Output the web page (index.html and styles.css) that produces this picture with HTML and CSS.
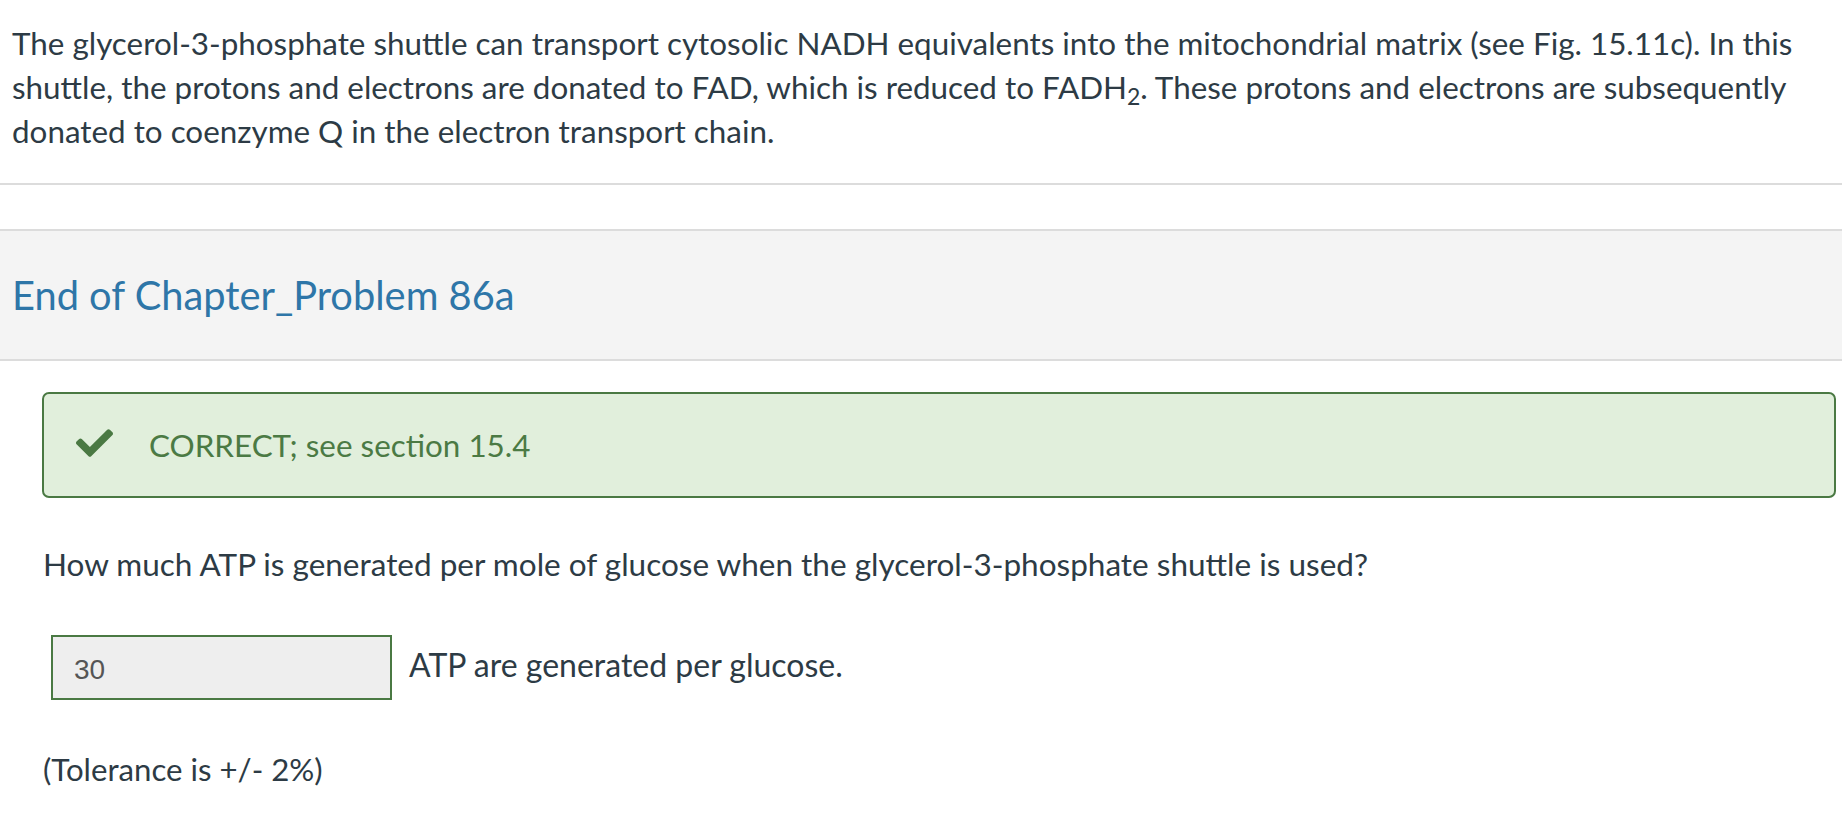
FILE: index.html
```html
<!DOCTYPE html>
<html lang="en">
<head>
<meta charset="utf-8">
<title>End of Chapter_Problem 86a</title>
<link rel="stylesheet" href="styles.css">
</head>
<body>
<div class="page">
  <section class="intro">
    <p class="intro-text">The glycerol-3-phosphate shuttle can transport cytosolic NADH equivalents into the mitochondrial matrix (see Fig. 15.11c). In this shuttle, the protons and electrons are donated to FAD, which is reduced to FADH<sub>2</sub>. These protons and electrons are subsequently donated to coenzyme Q in the electron transport chain.</p>
  </section>
  <hr class="divider">
  <div class="spacer"></div>
  <header class="question-header">
    <h2 class="question-title">End of Chapter_Problem 86a</h2>
  </header>
  <section class="question-body">
    <div class="alert-correct">
      <svg class="check-icon" viewBox="0 69 512 374" width="37" height="28" aria-hidden="true">
        <path fill="currentColor" d="M173.898 439.404l-166.4-166.4c-9.997-9.997-9.997-26.206 0-36.204l36.203-36.204c9.997-9.998 26.207-9.998 36.204 0L192 312.690 432.095 72.596c9.997-9.997 26.207-9.997 36.204 0l36.203 36.204c9.997 9.997 9.997 26.206 0 36.204l-294.400 294.401c-9.998 9.997-26.207 9.997-36.204-.001z"/>
      </svg>
      <span class="alert-text">CORRECT; see section 15.4</span>
    </div>
    <p class="question-text">How much ATP is generated per mole of glucose when the glycerol-3-phosphate shuttle is used?</p>
    <div class="answer-row">
      <input class="answer-input" type="text" value="30" readonly>
      <span class="answer-label">ATP are generated per glucose.</span>
    </div>
    <p class="tolerance">(Tolerance is +/- 2%)</p>
  </section>
</div>
</body>
</html>
```

FILE: styles.css
```css
html, body {
  margin: 0;
  padding: 0;
  background: #ffffff;
}

body {
  font-family: Lato, "Open Sans", "Liberation Sans", sans-serif;
  color: #2d3b45;
  font-size: 32px;
  line-height: 44px;
}

.page {
  display: flex;
  flex-direction: column;
}

.intro {
  padding: 21px 12px 30px 12px;
}

.intro-text {
  margin: 0;
  font-size: 31.4px;
}

.intro-text sub {
  font-size: 23px;
  line-height: 0;
  vertical-align: -6px;
}

.divider {
  margin: 0;
  border: 0;
  height: 2px;
  background: #dcdcdc;
}

.spacer {
  height: 44px;
}

.question-header {
  display: flex;
  align-items: center;
  height: 128px;
  padding: 0 12px;
  background: #f4f4f4;
  border-top: 2px solid #dcdcdc;
  border-bottom: 2px solid #dcdcdc;
}

.question-title {
  margin: 0;
  font-size: 39.8px;
  font-weight: 400;
  line-height: 48px;
  color: #2e76a8;
}

.question-body {
  display: flex;
  flex-direction: column;
  align-items: flex-start;
  padding: 31px 6px 0 43px;
}

.alert-correct {
  box-sizing: border-box;
  align-self: stretch;
  margin-left: -1px;
  display: flex;
  align-items: center;
  gap: 36px;
  height: 106px;
  padding: 0 32px;
  background: #e1efdc;
  border: 2px solid #4a7943;
  border-radius: 7px;
  color: #4a7943;
}

.check-icon {
  flex: none;
  margin-top: -4px;
}

.alert-text {
  font-size: 31.4px;
  line-height: 40px;
  color: #4b7a44;
}

.question-text {
  margin: 44px 0 0 0;
  font-size: 31.5px;
}

.answer-row {
  display: flex;
  align-items: center;
  gap: 17px;
  margin: 49px 0 0 8px;
}

.answer-input {
  box-sizing: border-box;
  width: 341px;
  height: 65px;
  margin: 0;
  padding: 4px 21px 0 21px;
  background: #eeeeee;
  border: 2px solid #4a7943;
  border-radius: 0;
  font-family: "Liberation Sans", Arial, sans-serif;
  font-size: 28px;
  color: #555555;
  outline: none;
}

.answer-label {
  padding-bottom: 6px;
}

.tolerance {
  margin: 47px 0 0 0;
  font-size: 31.2px;
}
```
